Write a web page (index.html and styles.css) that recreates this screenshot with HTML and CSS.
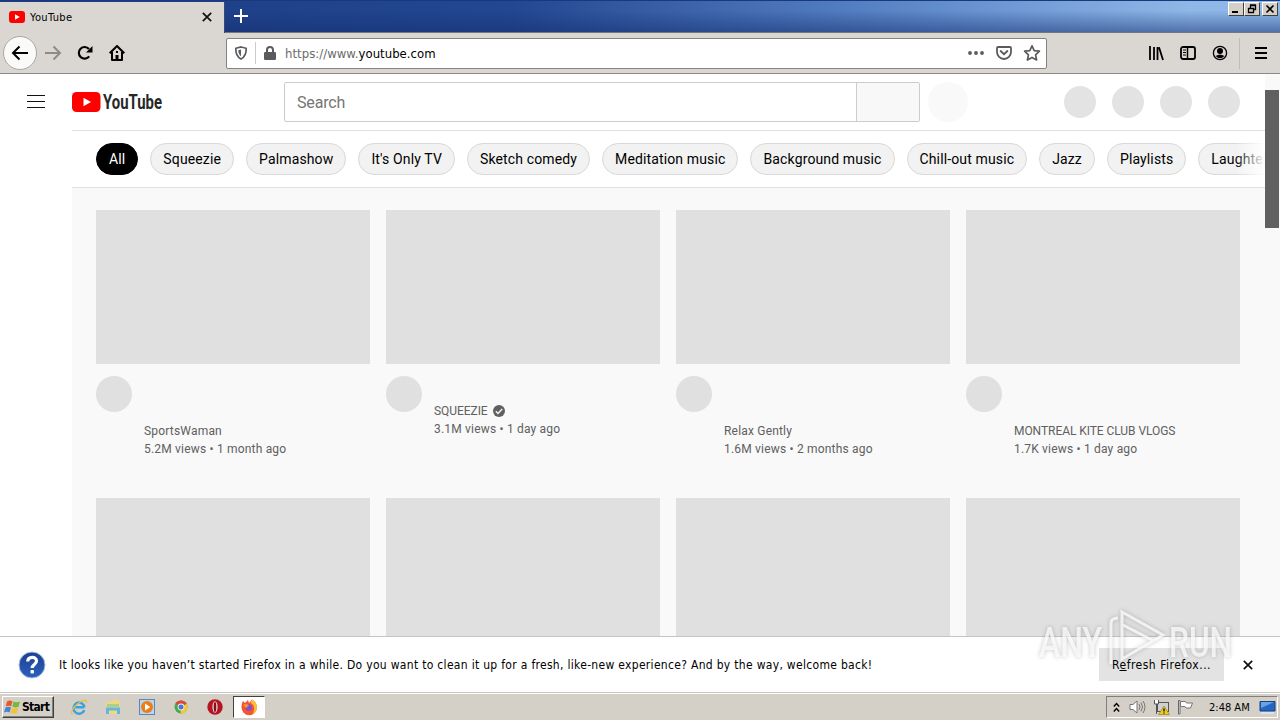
FILE: index.html
```
<!DOCTYPE html>
<html lang="en">
<head>
  <meta charset="UTF-8" />
  <title>YouTube</title>
  <link rel="stylesheet" href="styles.css">
</head>
<body>

  <!-- Browser chrome -->
  <div class="titlebar">
    <div class="tab">
      <svg class="favicon" width="16" height="12" viewBox="0 0 16 12"><rect width="16" height="12" rx="3" fill="#f00"/><path d="M6 3.3v5.4L10.8 6z" fill="#fff"/></svg>
      <span>YouTube</span>
      <svg class="tab-close" width="10" height="10" viewBox="0 0 10 10"><path d="M.8.8l8.4 8.4M9.2.8L.8 9.2" stroke="#111" stroke-width="1.7"/></svg>
    </div>
    <svg class="new-tab" width="14" height="14" viewBox="0 0 14 14"><path d="M7 0v14M0 7h14" stroke="#fff" stroke-width="2"/></svg>
    <div class="window-buttons">
      <button><svg width="14" height="12" viewBox="0 0 14 12"><path d="M3 9h6" stroke="#000" stroke-width="2"/></svg></button>
      <button><svg width="14" height="12" viewBox="0 0 14 12"><path d="M5.5 5V2.5h5v4H8.5M5 2h6M3.5 5.5h5v4h-5zM3 5.5h6" fill="none" stroke="#000" stroke-width="1.3"/></svg></button>
      <button class="win-close"><svg width="14" height="12" viewBox="0 0 14 12"><path d="M3.5 2.500l7 7M10.500 2.500l-7 7" stroke="#000" stroke-width="1.6"/></svg></button>
    </div>
  </div>

  <div class="toolbar">
    <div class="back"><svg width="18" height="16" viewBox="0 0 18 16"><path d="M17 8H2M8.500 1.500L2 8l6.500 6.500" fill="none" stroke="#000" stroke-width="2"/></svg></div>
    <svg class="forward" width="18" height="16" viewBox="0 0 18 16"><path d="M1 8h15M9.500 1.500L16 8l-6.500 6.500" fill="none" stroke="#8d8b87" stroke-width="2"/></svg>
    <svg class="reload" width="16" height="16" viewBox="0 0 16 16"><path d="M12.200 11.400A5.800 5.800 0 1 1 12 4" fill="none" stroke="#000" stroke-width="2.2"/><path d="M15.500 1v6.500H9z"/></svg>
    <svg class="home" width="16" height="16" viewBox="0 0 16 16"><path d="M.7 8.300L8 1l7.300 7.300M3 7v8h10V7" fill="none" stroke="#000" stroke-width="2" stroke-linejoin="round"/><path d="M6.500 15v-5h3v5z"/><path d="M7 6h2v2H7z"/></svg>

    <div class="urlbar">
      <svg class="shield" width="14" height="14" viewBox="0 0 14 14"><path d="M7 1l5.200 1.300c.2 5-1.200 8.700-5.200 10.700C3 11 1.600 7.300 1.800 2.300z" fill="none" stroke="#5b5b5e" stroke-width="1.7"/><path d="M7 3.600v6.600c-1.700-1.300-2.700-3.300-2.700-6z" fill="#5b5b5e"/></svg>
      <span class="url-divider"></span>
      <svg class="lock" width="12" height="14" viewBox="0 0 12 14"><rect y="6" width="12" height="8" rx="1.2" fill="#5b5b5e"/><path d="M3 7V4a3 3 0 0 1 6 0v3" fill="none" stroke="#5b5b5e" stroke-width="2"/></svg>
      <span class="url"><i>https://www.</i>youtube.com</span>
      <svg class="dots" width="16" height="4" viewBox="0 0 16 4"><g fill="#5b5b5e"><circle cx="2" cy="2" r="1.9"/><circle cx="8" cy="2" r="1.9"/><circle cx="14" cy="2" r="1.9"/></g></svg>
      <svg class="pocket" width="16" height="14" viewBox="0 0 16 14"><path d="M2 1h12q1 0 1 1v4a7 7 0 0 1-14 0V2q0-1 1-1z" fill="none" stroke="#5b5b5e" stroke-width="1.8"/><path d="M4.600 5L8 8.200 11.400 5" fill="none" stroke="#5b5b5e" stroke-width="1.8" stroke-linecap="round"/></svg>
      <svg class="star" width="18" height="18" viewBox="0 0 18 18"><path d="M9 1.800l2.200 4.800 5.200.6-3.800 3.600 1 5.200L9 13.400 4.400 16l1-5.200L1.600 7.200l5.200-.6z" fill="none" stroke="#5b5b5e" stroke-width="1.7" stroke-linejoin="round"/></svg>
    </div>

    <div class="tools">
      <svg width="16" height="16" viewBox="0 0 16 16"><path d="M2 1v14M6 2v13M9.500 2v13M11 2.200L15 15" fill="none" stroke="#000" stroke-width="1.8"/></svg>
      <svg width="16" height="16" viewBox="0 0 16 16"><rect x="1" y="2" width="14" height="12" rx="2" fill="none" stroke="#000" stroke-width="1.8"/><path d="M7.500 2v12" stroke="#000" stroke-width="1.5"/><path d="M3 5h3M3 7.500h3M3 10h3" stroke="#000"/></svg>
      <svg width="16" height="16" viewBox="0 0 16 16"><circle cx="8" cy="8" r="6.6" fill="none" stroke="#000" stroke-width="1.3"/><circle cx="8" cy="6" r="3"/><path d="M3.600 11q4.400-3 8.800 0Q8 15.500 3.600 11z"/></svg>
    </div>
    <div class="menu"><svg width="12" height="12" viewBox="0 0 12 12"><path d="M0 1h12M0 6h12M0 11h12" stroke="#000" stroke-width="2"/></svg></div>
  </div>

  <!-- Page -->
  <div class="page">
    <div class="site">
      <header class="masthead">
        <svg class="guide" width="18" height="14" viewBox="0 0 18 14"><path d="M0 .5h18M0 6.500h18M0 12.500h18" stroke="#111" stroke-width="1"/></svg>
        <svg class="logo" width="96" height="28" viewBox="0 -3 96 28"><rect y="1" width="28.5" height="20" rx="4.5" fill="#f00"/><path d="M11.500 6.700v8.600L19 11z" fill="#fff"/><text x="31" y="18.3" textLength="59" lengthAdjust="spacingAndGlyphs">YouTube</text></svg>
        <div class="search">
          <div class="search-text">Search</div>
          <div class="search-button"></div>
        </div>
        <div class="mic"></div>
        <div class="actions"><i></i><i></i><i></i><i></i></div>
      </header>

      <div class="body">
        <nav class="chips">
          <span class="chip active">All</span>
          <span class="chip">Squeezie</span>
          <span class="chip">Palmashow</span>
          <span class="chip">It's Only TV</span>
          <span class="chip">Sketch comedy</span>
          <span class="chip">Meditation music</span>
          <span class="chip">Background music</span>
          <span class="chip">Chill-out music</span>
          <span class="chip">Jazz</span>
          <span class="chip">Playlists</span>
          <span class="chip">Laughter</span>
        </nav>
        <main class="videos">
          <article class="video">
            <div class="thumb"></div>
            <div class="details">
              <div class="avatar"></div>
              <div class="meta"><p>SportsWaman</p><p>5.2M views • 1 month ago</p></div>
            </div>
          </article>
          <article class="video">
            <div class="thumb"></div>
            <div class="details">
              <div class="avatar"></div>
              <div class="meta short">
                <p class="caps">SQUEEZIE <svg width="12" height="12" viewBox="0 0 12 12"><circle cx="6" cy="6" r="6" fill="#606060"/><path d="M2.800 6.200l2.200 2.200 4.200-4.400" fill="none" stroke="#f9f9f9" stroke-width="1.4"/></svg></p>
                <p>3.1M views • 1 day ago</p>
              </div>
            </div>
          </article>
          <article class="video">
            <div class="thumb"></div>
            <div class="details">
              <div class="avatar"></div>
              <div class="meta"><p>Relax Gently</p><p>1.6M views • 2 months ago</p></div>
            </div>
          </article>
          <article class="video">
            <div class="thumb"></div>
            <div class="details">
              <div class="avatar"></div>
              <div class="meta"><p class="caps">MONTREAL KITE CLUB VLOGS</p><p>1.7K views • 1 day ago</p></div>
            </div>
          </article>
          <article class="video"><div class="thumb"></div></article>
          <article class="video"><div class="thumb"></div></article>
          <article class="video"><div class="thumb"></div></article>
          <article class="video"><div class="thumb"></div></article>
        </main>
      </div>
    </div>
    <div class="scrollbar"><div class="thumb-bar"></div></div>
  </div>

  <!-- Firefox notification -->
  <div class="notice">
    <svg class="question" width="28" height="28" viewBox="0 0 28 28"><defs><linearGradient id="q" x2="0" y2="1"><stop stop-color="#1b3f92"/><stop offset="1" stop-color="#2d62bd"/></linearGradient></defs><circle cx="14" cy="14" r="13" fill="url(#q)" stroke="#a9bbdc" stroke-width="1"/><path d="M9.700 10.500C10 5.200 18.500 5.200 18.500 10c0 3.500-4.300 3.500-4.300 7" fill="none" stroke="#fff" stroke-width="3.2"/><rect x="12.5" y="19" width="3.5" height="3.5" rx="1" fill="#fff"/></svg>
    <p>It looks like you haven’t started Firefox in a while. Do you want to clean it up for a fresh, like-new experience? And by the way, welcome back!</p>
    <button>R<u>e</u>fresh Firefox...</button>
    <svg class="notice-close" width="10" height="10" viewBox="0 0 10 10"><path d="M.8.8l8.400 8.400M9.200.8L.8 9.200" stroke="#111" stroke-width="1.7"/></svg>
  </div>

  <!-- Taskbar -->
  <div class="taskbar">
    <div class="start">
      <svg width="17" height="16" viewBox="0 0 17 16"><path d="M3 2.500Q5.500.5 8.500 2.200L7.200 7.300Q4.500 6 1.700 7.600z" fill="#e8592a"/><path d="M9.500 2.600q3 1.500 6.500 0l-1.500 5.200q-3 1.500-6.200-.1z" fill="#79b83a"/><path d="M1.400 8.700Q4.200 7 7 8.400l-1.400 5Q3 12 0 13.600z" fill="#4583d3"/><path d="M8 8.900q3 1.300 6.200.1L12.900 14q-3.200 1.300-6.200-.1z" fill="#f5c22f"/></svg>
      <b>Start</b>
    </div>
    <div class="pinned">
      <svg width="18" height="18" viewBox="0 0 18 18"><path d="M14.500 9.300H5.200M14.300 12.300A5.600 5.600 0 1 1 14.600 9" fill="none" stroke="#39a3df" stroke-width="2.5"/><path d="M3 15.500C-.5 17.500 2 10 8 5.500c5-4 10-4 8.500-.5" fill="none" stroke="#e5bf48" stroke-width="1.2"/></svg>
      <svg width="18" height="18" viewBox="0 0 18 18"><path d="M2 4h5l1.500-2H15v3h1v11H2z" fill="#eed983"/><path d="M3 6h12v3H3z" fill="#a9d08c"/><path d="M2 9.500h14V16h-3v-3.500H5V16H2z" fill="#67b5dd"/></svg>
      <svg width="18" height="18" viewBox="0 0 18 18"><rect x="1.500" y="1.500" width="15" height="15" fill="#b9d6ee" stroke="#5689b8"/><circle cx="9" cy="9" r="6" fill="#ed7d18"/><path d="M7 5.500v7L12.300 9z" fill="#fff"/></svg>
      <svg width="18" height="18" viewBox="0 0 18 18"><circle cx="9" cy="9" r="6.5" fill="#45a94c"/><path d="M9 9L3.300 5.700A6.600 6.600 0 0 1 14.700 5.700z" fill="#df4638"/><path d="M9 9l5.700-3.300A6.600 6.600 0 0 1 8.500 15.600z" fill="#f5c730"/><circle cx="9" cy="9" r="3.4" fill="#eee"/><circle cx="9" cy="9" r="2.5" fill="#4679cf"/></svg>
      <svg width="18" height="18" viewBox="0 0 18 18"><circle cx="9" cy="9" r="7.7" fill="#b51420"/><ellipse cx="9" cy="9" rx="2.600" ry="5.800" fill="#e9dedb"/><ellipse cx="9" cy="9" rx="1.300" ry="5" fill="#861016"/></svg>
    </div>
    <div class="running">
      <svg width="18" height="18" viewBox="0 0 18 18"><path d="M3 3l2 2 3-3 1 3 3-3.500C15 3.500 17 6 17 9.500A7.700 7.700 0 0 1 1.500 9.500C1.500 6.500 2 5 3 3z" fill="#f55332"/><path d="M12 1.500C15 3.500 17 6 17 9.500c-.2 3-2 5.500-4.500 6.600C15 12 15 7 10.500 5z" fill="#ffbf34"/><circle cx="8.8" cy="9.5" r="3.2" fill="#7854cf"/><path d="M3 7q3.500-2 6 .5l-3 2.500z" fill="#ff8d2f"/></svg>
    </div>
    <div class="tray">
      <svg width="7" height="11" viewBox="0 0 7 11"><path d="M.8 4.500l2.700-3 2.700 3M.8 9.500l2.700-3 2.700 3" fill="none" stroke="#000" stroke-width="1.4"/></svg>
      <svg class="sound" width="17" height="16" viewBox="0 0 17 16"><path d="M1 5.500h3L8 2v12l-4-3.500H1z" fill="#fff" stroke="#777"/><path d="M10 5q2 3 0 6M12 3.500q3 4.500 0 9M14 2q4 6 0 12" fill="none" stroke="#777"/></svg>
      <svg class="net" width="17" height="16" viewBox="0 0 17 16"><rect x="4.500" y="3.500" width="11" height="9" fill="#cfd2d4" stroke="#555"/><path d="M1.500 1v4h4V1M3.500 5v10" fill="#fff" stroke="#555"/><path d="M11 7l5.300 8.500H5.700z" fill="#f4cc20" stroke="#9b8109" stroke-width=".7"/><path d="M11 9.500v3M11 13.500v1" stroke="#111" stroke-width="1.4"/></svg>
      <svg class="flag" width="17" height="16" viewBox="0 0 17 16"><path d="M1.500 15V1.500h1.500V15z" fill="#fff" stroke="#666"/><path d="M3.500 2.500h5l1 1.500h6L13.500 9H9L8 7.500H3.500z" fill="#fff" stroke="#777"/></svg>
      <span class="clock">2:48 AM</span>
      <svg class="desktop" width="17" height="15" viewBox="0 0 17 15"><path d="M1 1.500h15v9.500H1z" fill="#2467c2" stroke="#183f7e"/><path d="M2 2h13L2 8z" fill="#67a3e5"/><path d="M2 13h13" stroke="#d7e4ee" stroke-width="2"/></svg>
    </div>
  </div>

  <svg class="watermark" width="220" height="76" viewBox="0 0 220 76">
    <g class="mark">
      <text x="8" y="51" textLength="63" lengthAdjust="spacingAndGlyphs">ANY</text>
      <text x="138" y="51" textLength="63" lengthAdjust="spacingAndGlyphs">RUN</text>
      <path d="M80 58V17q0-5 7-5M91 6l41 23-41 24zM92 19l31 16"/>
    </g>
  </svg>

</body>
</html>
```

FILE: styles.css
```
:root {
  --chrome: #dad7d2;
  --grey: #e0e0e0;
  --page: #f9f9f9;
}

* {
  margin: 0;
  padding: 0;
  box-sizing: border-box;
}

body {
  width: 1280px;
  height: 720px;
  overflow: hidden;
  display: flex;
  flex-direction: column;
  background: #fff;
  font-family: "DejaVu Sans Condensed", "DejaVu Sans", sans-serif;
  font-size: 11px;
  color: #000;
}

svg {
  display: block;
  flex: none;
}

/* title bar */
.titlebar {
  height: 33px;
  flex: none;
  display: flex;
  background:
    linear-gradient(to bottom, rgba(255, 255, 255, 0) 30%, rgba(20, 45, 110, 0.5)),
    linear-gradient(to right, #1c3c84, #234791 40%, #5681c4 68%, #8fb8e8 93%, #8db8e9);
  border-top: 1px solid #183a7d;
  border-bottom: 1px solid #73777f;
}

.tab {
  width: 225px;
  height: 32px;
  margin-top: 1px;
  display: flex;
  align-items: center;
  padding: 0 12px 2px 9px;
  background: var(--chrome);
  border-right: 1px solid #344a79;
}

.tab span {
  margin-left: 5px;
  letter-spacing: 0.35px;
}

.tab-close {
  margin-left: auto;
}

.new-tab {
  margin: 8px 0 0 9px;
}

.window-buttons {
  margin: 1px 2px 0 auto;
  display: flex;
}

.window-buttons button {
  width: 16px;
  height: 14px;
  background: #d4d0c8;
  border: 1px solid;
  border-color: #fff #404040 #404040 #fff;
}

.window-buttons .win-close {
  margin-left: 2px;
}

/* navigation toolbar */
.toolbar {
  height: 41px;
  flex: none;
  display: flex;
  align-items: center;
  background: var(--chrome);
  border-bottom: 1px solid #8b8985;
  padding-left: 3px;
}

.back {
  width: 34px;
  height: 34px;
  border: 1px solid #aaa8a4;
  border-radius: 50%;
  background: #fafaf9;
  display: flex;
  align-items: center;
  justify-content: center;
}

.forward { margin-left: 7px; }
.reload { margin-left: 15px; }
.home { margin-left: 16px; }

.urlbar {
  width: 821px;
  height: 31px;
  margin-left: 101px;
  display: flex;
  align-items: center;
  background: #fff;
  border: 1px solid #85837f;
  border-radius: 2px;
  padding: 0 5px 0 7px;
}

.url-divider {
  width: 1px;
  height: 22px;
  background: #ccc;
  margin: 0 8px 0 7px;
}

.url {
  margin-left: 9px;
  font-size: 13px;
  letter-spacing: 0.03px;
}

.url i {
  font-style: normal;
  color: #6b6b6b;
}

.dots { margin-left: auto; }
.pocket { margin-left: 12px; }
.star { margin-left: 11px; }

.tools {
  display: flex;
  gap: 16px;
  margin-left: 101px;
}

.menu {
  margin-left: 11px;
  height: 31px;
  padding-left: 15px;
  border-left: 1px solid #bfbcb7;
  display: flex;
  align-items: center;
}

/* youtube */
.page {
  height: 562px;
  flex: none;
  display: flex;
  overflow: hidden;
  font-family: Roboto, sans-serif;
}

.site {
  width: 1265px;
}

.masthead {
  height: 56px;
  display: flex;
  align-items: center;
  padding-left: 27px;
}

.logo {
  margin-left: 27px;
}

.logo text {
  font: 700 20px Roboto, sans-serif;
  fill: #282828;
}

.search {
  width: 636px;
  height: 40px;
  margin-left: 116px;
  display: flex;
  border: 1px solid #ccc;
  border-radius: 2px;
}

.search-text {
  width: 572px;
  padding-left: 12px;
  line-height: 39px;
  font-size: 16px;
  letter-spacing: -0.15px;
  color: #757575;
  border-right: 1px solid #ccc;
}

.search-button {
  flex: 1;
  background: #f8f8f8;
}

.mic {
  width: 40px;
  height: 40px;
  margin-left: 8px;
  border-radius: 50%;
  background: #f9f9f9;
}

.actions {
  display: flex;
  gap: 16px;
  margin-left: 96px;
}

.actions i {
  width: 32px;
  height: 32px;
  border-radius: 50%;
  background: #e3e3e3;
}

.body {
  margin-left: 72px;
  background: var(--page);
}

.chips {
  height: 58px;
  display: flex;
  align-items: center;
  gap: 12px;
  padding-left: 24px;
  overflow: hidden;
  position: relative;
  background: #fff;
  border-top: 1px solid #e0e0e0;
  border-bottom: 1px solid #e0e0e0;
}

.chips::after {
  content: "";
  position: absolute;
  right: 0;
  top: 0;
  width: 30px;
  height: 100%;
  background: linear-gradient(to right, rgba(255, 255, 255, 0), #fff);
}

.chip {
  height: 32px;
  flex: none;
  padding: 0 12px;
  border: 1px solid #d9d9d9;
  border-radius: 16px;
  background: #f2f2f2;
  font-size: 14px;
  line-height: 30px;
  letter-spacing: 0.135px;
}

.chip.active {
  background: #000;
  border-color: #000;
  color: #fff;
}

.videos {
  display: grid;
  grid-template-columns: repeat(4, 274px);
  grid-auto-rows: 288px;
  column-gap: 16px;
  padding: 22px 0 0 24px;
}

.thumb {
  height: 154px;
  background: var(--grey);
}

.details {
  display: flex;
  margin-top: 12px;
}

.avatar {
  width: 36px;
  height: 36px;
  margin-right: 12px;
  border-radius: 50%;
  background: var(--grey);
}

.meta {
  margin-top: 46px;
  font-size: 12px;
  line-height: 18px;
  letter-spacing: 0.19px;
  color: #606060;
}

.meta.short {
  margin-top: 26px;
}

.meta p {
  display: flex;
  align-items: center;
  gap: 5px;
  white-space: nowrap;
}

.meta .caps {
  letter-spacing: -0.06px;
}

.scrollbar {
  width: 15px;
  padding-top: 16px;
  background: #f9f9f9;
}

.thumb-bar {
  width: 14px;
  height: 138px;
  background: #606060;
}

/* refresh prompt */
.notice {
  height: 56px;
  flex: none;
  display: flex;
  align-items: center;
  border-top: 1px solid #c4c4c4;
  background: #fff;
  padding-left: 18px;
}

.notice p {
  width: 830px;
  margin-left: 13px;
  font-size: 12px;
  letter-spacing: 0.305px;
  white-space: nowrap;
}

.notice button {
  width: 125px;
  height: 33px;
  margin-left: 210px;
  border: 0;
  background: #e3e3e3;
  font: 12px "DejaVu Sans Condensed", sans-serif;
  letter-spacing: 0.5px;
}

.notice-close {
  margin-left: 19px;
}

/* taskbar */
.taskbar {
  height: 28px;
  flex: none;
  display: flex;
  align-items: center;
  background: #d4d0c8;
  border-top: 1px solid #c9c6bf;
  box-shadow: inset 0 1px #fff;
  padding: 1px 2px 0;
}

.start {
  width: 52px;
  height: 22px;
  display: flex;
  align-items: center;
  gap: 1px;
  padding-left: 1px;
  border: 1px solid;
  border-color: #fff #404040 #404040 #fff;
  box-shadow: inset -1px -1px #808080;
}

.start b {
  font-size: 12px;
  letter-spacing: -0.7px;
}

.pinned {
  display: flex;
  gap: 16px;
  margin-left: 16px;
}

.running {
  width: 32px;
  height: 22px;
  margin-left: 9px;
  display: flex;
  align-items: center;
  justify-content: center;
  background: #fff;
  border: 1px solid;
  border-color: #404040 #fff #fff #404040;
}

.tray {
  width: 172px;
  height: 22px;
  margin-left: auto;
  display: flex;
  align-items: center;
  padding-left: 6px;
  border: 1px solid;
  border-color: #808080 #fff #fff #808080;
}

.sound { margin-left: 9px; }
.net,
.flag { margin-left: 7px; }

.clock {
  margin-left: 15px;
  width: 42px;
  white-space: nowrap;
}

.desktop {
  margin-left: 8px;
}

/* overlay logo */
.watermark {
  position: absolute;
  left: 1031px;
  top: 606px;
}

.mark {
  fill: none;
  stroke: rgba(255, 255, 255, 0.75);
  stroke-width: 3;
  filter: drop-shadow(0 0 2px rgba(0, 0, 0, 0.3));
}

.mark text {
  font: 500 43px Roboto, sans-serif;
  fill: rgba(255, 255, 255, 0.75);
  stroke: none;
}
```
